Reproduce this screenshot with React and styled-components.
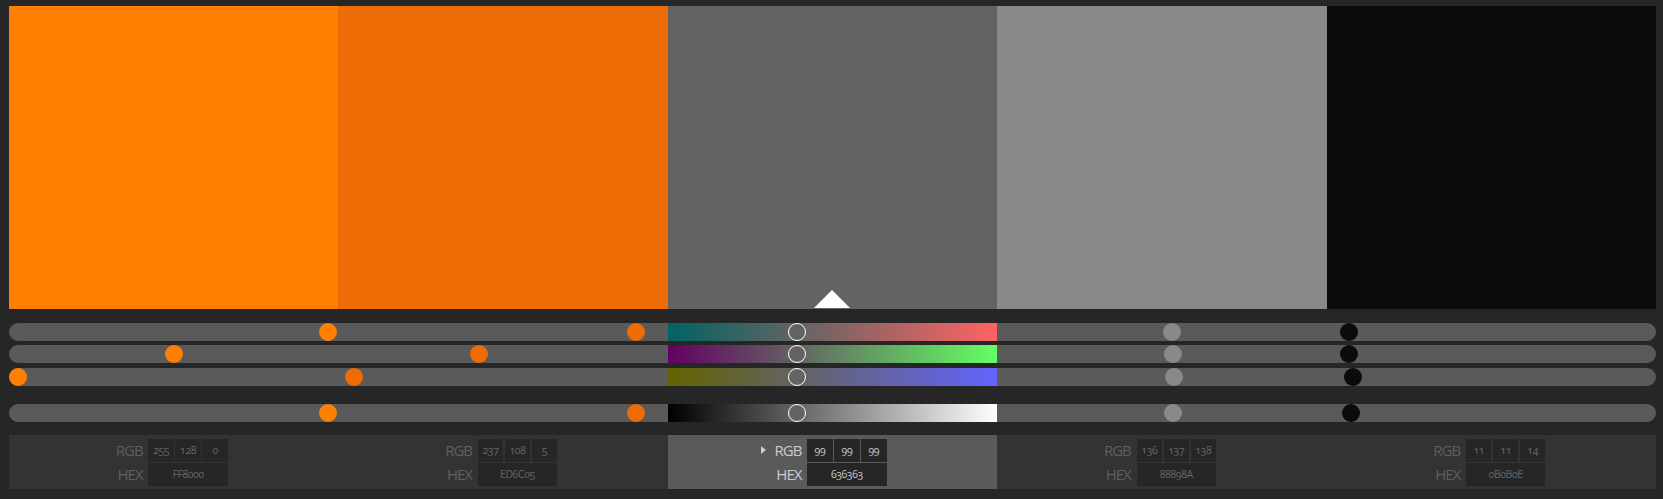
import React from "react"
import styled, { createGlobalStyle } from 'styled-components';

const colors = [
  { rgb: [255, 128, 0], hex: 'FF8000', value: 255 },
  { rgb: [237, 108, 5], hex: 'ED6C05', value: 237 },
  { rgb: [99, 99, 99], hex: '636363', value: 99 },
  { rgb: [136, 137, 138], hex: '88898A', value: 137 },
  { rgb: [11, 11, 14], hex: '0B0B0E', value: 12.5 },
];

const ACTIVE = 2;
const THUMB = 18;
const THUMB_RANGE = 310;

const channelGradient = (channel, rgb) => {
  const from = [...rgb];
  const to = [...rgb];
  from[channel] = 0;
  to[channel] = 255;
  return `linear-gradient(to right, rgb(${from.join(',')}), rgb(${to.join(',')}))`;
};

const valueGradient = 'linear-gradient(to right, #000, #fff)';

const Slider = ({ source }) => (
  <Track>
    {colors.map((color, i) => (
      <TrackCell key={color.hex} $fill={i === ACTIVE ? source.gradient(color.rgb) : null}>
        <Thumb
          $color={`#${color.hex}`}
          $active={i === ACTIVE}
          style={{ left: `${(source.get(color) / 255) * THUMB_RANGE + 0.2}px` }}
        />
      </TrackCell>
    ))}
  </Track>
);

const channels = [0, 1, 2].map(channel => ({
  get: color => color.rgb[channel],
  gradient: rgb => channelGradient(channel, rgb),
}));

const brightness = {
  get: color => color.value,
  gradient: () => valueGradient,
};

const App = () => (
  <Page>
    <GlobalStyle />
    <Swatches>
      {colors.map((color, i) => (
        <Swatch key={color.hex} $color={`#${color.hex}`}>
          {i === ACTIVE && <Marker />}
        </Swatch>
      ))}
    </Swatches>
    <ChannelSliders>
      {channels.map((channel, i) => <Slider key={i} source={channel} />)}
    </ChannelSliders>
    <BrightnessSlider>
      <Slider source={brightness} />
    </BrightnessSlider>
    <Readouts>
      {colors.map((color, i) => (
        <Readout key={color.hex} $active={i === ACTIVE}>
          <Label $active={i === ACTIVE}>
            {i === ACTIVE && <Arrow />}
            RGB
          </Label>
          <Values>
            {color.rgb.map((v, n) => <Value key={n} $active={i === ACTIVE}>{v}</Value>)}
          </Values>
          <Label $active={i === ACTIVE}>HEX</Label>
          <Values>
            <Value $active={i === ACTIVE}>{color.hex}</Value>
          </Values>
        </Readout>
      ))}
    </Readouts>
  </Page>
)

const GlobalStyle = createGlobalStyle`
  html, body {
    margin: 0;
    background: #262626;
  }
`;

const Page = styled.div`
  width: 1663px;
  height: 499px;
  box-sizing: border-box;
  padding: 6px 7px 10px 9px;
  overflow: hidden;
  font-family: "Open Sans", "Liberation Sans", sans-serif;
  font-variant-numeric: oldstyle-nums;
`;

const Swatches = styled.div`
  display: grid;
  grid-template-columns: repeat(5, 1fr);
  height: 303px;
`;

const Swatch = styled.div`
  position: relative;
  background: ${props => props.$color};
`;

const Marker = styled.div`
  position: absolute;
  left: 50%;
  bottom: 1px;
  margin-left: -18px;
  width: 0;
  height: 0;
  border-left: 18px solid transparent;
  border-right: 18px solid transparent;
  border-bottom: 18px solid #fff;
`;

const ChannelSliders = styled.div`
  display: flex;
  flex-direction: column;
  gap: 4.4px;
  margin-top: 14px;
`;

const BrightnessSlider = styled.div`
  margin-top: 18px;
`;

const Track = styled.div`
  display: grid;
  grid-template-columns: repeat(5, 1fr);
  height: ${THUMB}px;
  border-radius: 9px;
  background: #5a5a5a;
`;

const TrackCell = styled.div`
  position: relative;
  background: ${props => props.$fill || 'none'};
`;

const Thumb = styled.div`
  position: absolute;
  top: 0;
  box-sizing: border-box;
  width: ${THUMB}px;
  height: ${THUMB}px;
  border-radius: 50%;
  background: ${props => props.$color};
  border: ${props => props.$active ? '1px solid #fff' : 'none'};
`;

const Readouts = styled.div`
  display: grid;
  grid-template-columns: repeat(5, 1fr);
  height: 54px;
  margin-top: 13px;
  background: #333;
`;

const Readout = styled.div`
  display: grid;
  grid-template-columns: 133.6px 79.4px;
  grid-template-rows: 23px 23px;
  column-gap: 5.8px;
  row-gap: 1px;
  align-content: start;
  padding-top: 4px;
  background: ${props => props.$active ? '#5a5a5a' : 'none'};
`;

const Label = styled.div`
  display: flex;
  align-items: center;
  justify-content: flex-end;
  font-size: 15px;
  letter-spacing: -1px;
  color: ${props => props.$active ? '#ccc' : '#5f5f5f'};
`;

const Arrow = styled.span`
  width: 0;
  height: 0;
  margin-right: 9px;
  border-top: 4.5px solid transparent;
  border-bottom: 4.5px solid transparent;
  border-left: 5px solid #ccc;
`;

const Values = styled.div`
  display: flex;
  gap: 1.5px;
`;

const Value = styled.div`
  flex: 1;
  display: flex;
  align-items: center;
  justify-content: center;
  font-size: 10.5px;
  letter-spacing: -0.4px;
  background: #262626;
  color: ${props => props.$active ? '#ccc' : '#666'};
`;

export default App
